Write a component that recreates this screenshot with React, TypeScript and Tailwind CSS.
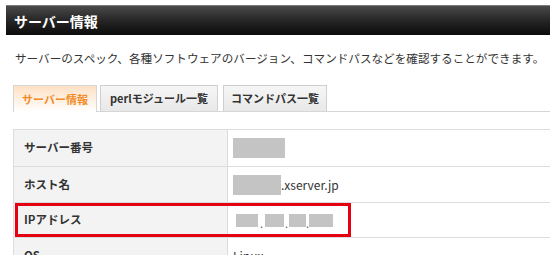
const jp = { fontFamily: '"Noto Sans CJK JP", "Noto Sans", sans-serif' };

const Block = ({ w, h }: { w: string; h: string }) => (
  <span className={`inline-block ${w} ${h} bg-[#c4c4c4]`} />
);

export default function App() {
  return (
    <div
      className="w-[550px] h-[255px] overflow-hidden bg-white pt-[5px] pl-[6px] text-[#333]"
      style={jp}
    >
      {/* Title bar */}
      <div className="h-[30px] flex items-center pl-[8px] bg-linear-to-b from-[#4a4a4a] via-[#262626] to-[#0c0c0c] border-t border-[#7a7a7a]">
        <span className="text-white font-bold text-[14px] leading-none">サーバー情報</span>
      </div>

      <div className="pl-[7px]">
        {/* Description */}
        <p className="mt-[15px] pl-[2px] text-[11.6px] leading-[16px] whitespace-nowrap">
          サーバーのスペック、各種ソフトウェアのバージョン、コマンドパスなどを確認することができます。
        </p>

        {/* Tabs */}
        <div className="mt-[19px] flex items-end border-b border-[#d6d6d6] w-[560px]">
          <div className="w-[84px] h-[27px] -mb-px flex items-center justify-center border border-b-0 border-[#d6d6d6] bg-linear-to-b from-[#fde0c4] to-white text-[#f28c28] font-bold text-[11px]">
            サーバー情報
          </div>
          <div className="ml-[3px] w-[118px] h-[26px] flex items-center justify-center border border-b-0 border-[#cfcfcf] bg-linear-to-b from-[#f6f6f6] to-[#e8e8e8] font-bold text-[11px]">
            perlモジュール一覧
          </div>
          <div className="ml-[5px] w-[104px] h-[26px] flex items-center justify-center border border-b-0 border-[#cfcfcf] bg-linear-to-b from-[#f6f6f6] to-[#e8e8e8] font-bold text-[11px]">
            コマンドパス一覧
          </div>
        </div>

        {/* Info table */}
        <div className="mt-[17px] w-[560px] border-t border-l border-[#dcdcdc] grid grid-cols-[214px_1fr]">
          <div className="h-[37px] flex items-center pl-[10px] bg-[#f3f3f3] border-r border-b border-[#dcdcdc] font-bold text-[11.5px]">
            サーバー番号
          </div>
          <div className="h-[37px] flex items-center pl-[5px] border-b border-[#dcdcdc]">
            <Block w="w-[52px]" h="h-[20px]" />
          </div>

          <div className="h-[36px] flex items-center pl-[10px] bg-[#f3f3f3] border-r border-b border-[#dcdcdc] font-bold text-[11.5px]">
            ホスト名
          </div>
          <div className="h-[36px] flex items-center pl-[5px] border-b border-[#dcdcdc] text-[12px]">
            <Block w="w-[48px]" h="h-[20px]" />
            <span>.xserver.jp</span>
          </div>

          <div className="relative h-[35px] flex items-center pl-[10px] bg-[#f3f3f3] border-r border-b border-[#dcdcdc] font-bold text-[11.5px]">
            IPアドレス
            {/* highlight frame */}
            <div className="absolute left-[1px] top-[0px] w-[336px] h-[34px] border-[3px] border-[#e50012] z-10" />
          </div>
          <div className="h-[35px] flex items-center pl-[8px] border-b border-[#dcdcdc] text-[11px] text-[#555]">
            <Block w="w-[22px]" h="h-[13px]" />
            <span className="w-[7px] text-center self-end mb-[8px] leading-none">.</span>
            <Block w="w-[19px]" h="h-[13px]" />
            <span className="w-[5px] text-center self-end mb-[8px] leading-none">.</span>
            <Block w="w-[17px]" h="h-[13px]" />
            <span className="w-[3px] text-center self-end mb-[8px] leading-none">.</span>
            <Block w="w-[24px]" h="h-[13px]" />
          </div>

          <div className="h-[36px] flex items-center pl-[10px] bg-[#f3f3f3] border-r border-b border-[#dcdcdc] font-bold text-[11.5px]">
            OS
          </div>
          <div className="h-[36px] flex items-center pl-[5px] border-b border-[#dcdcdc] text-[12px]">
            Linux
          </div>
        </div>
      </div>
    </div>
  );
}
